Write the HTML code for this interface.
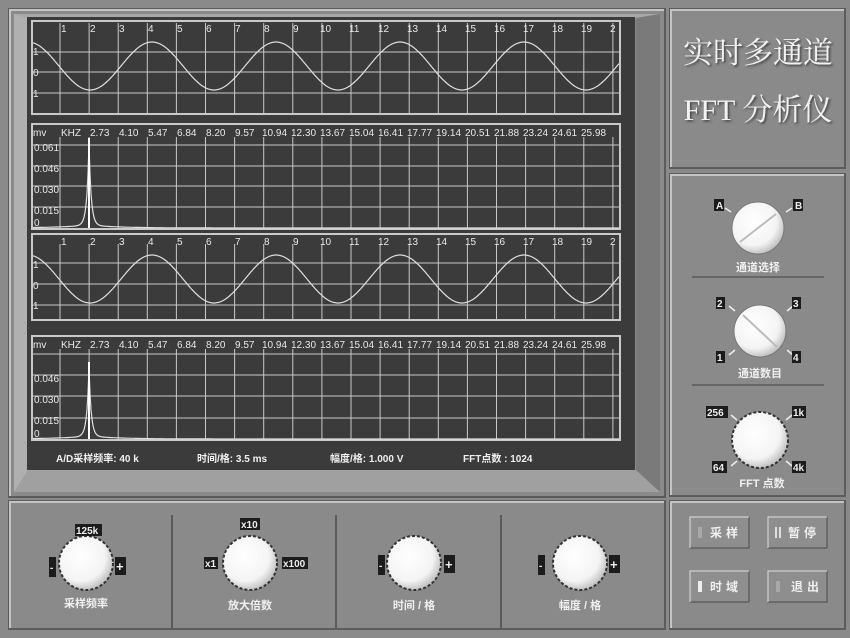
<!DOCTYPE html>
<html><head><meta charset="utf-8"><style>
body{margin:0;width:850px;height:638px;overflow:hidden;background:#8c8c8c;font-family:"Liberation Sans","Noto Sans CJK SC",sans-serif}
svg{position:absolute;left:0;top:0}
.t{fill:#e8e8e8;font-size:10px;font-family:"Liberation Sans",sans-serif}
.c{fill:#f0f0f0;font-family:"Liberation Sans","Noto Sans CJK SC",sans-serif;font-weight:bold}
.tag{fill:#1c1c1c}
</style></head><body>
<svg width="850" height="638" viewBox="0 0 850 638" xmlns="http://www.w3.org/2000/svg">
<defs>
<radialGradient id="kn" cx="40%" cy="38%" r="65%"><stop offset="0" stop-color="#ffffff"/><stop offset="0.7" stop-color="#f4f4f4"/><stop offset="1" stop-color="#bdbdbd"/></radialGradient>
<filter id="sh"><feDropShadow dx="1.5" dy="1.5" stdDeviation="1" flood-color="#333" flood-opacity="0.8"/></filter>
</defs>
<rect width="850" height="638" fill="#8a8a8a"/>
<!-- panels -->
<g fill="#8a8a8a">
<rect x="9" y="9" width="656" height="488" stroke="#5c5c5c" stroke-width="2"/>
<rect x="670" y="9" width="175" height="159" stroke="#5c5c5c" stroke-width="2"/>
<rect x="670" y="174" width="175" height="322" stroke="#5c5c5c" stroke-width="2"/>
<rect x="9" y="501" width="656" height="128" stroke="#5c5c5c" stroke-width="2"/>
<rect x="670" y="501" width="175" height="128" stroke="#5c5c5c" stroke-width="2"/>
</g>
<g stroke="#c4c4c4" stroke-width="2" fill="none">
<path d="M10 496V10H664"/><path d="M671 167V10H844"/><path d="M671 495V175H844"/><path d="M10 628V502H664"/><path d="M671 628V502H844"/>
</g>
<!-- screen bevel -->
<polygon points="14,14 660,14 636,18 28,18" fill="#a8a8a8"/>
<polygon points="28,470 636,470 660,492 14,492" fill="#a0a0a0"/>
<polygon points="636,18 660,14 660,492 636,470" fill="#7a7a7a"/>
<polygon points="14,14 28,18 28,470 14,492" fill="#b0b0b0"/>
<rect x="27" y="17" width="608" height="453" fill="#3b3b3b"/>
<g id="grid" stroke="#c9c9c9" stroke-width="1" fill="none"></g>
<g id="waves" stroke="#e0e0e0" stroke-width="1.2" fill="none"></g>
<g class="t">
<g id="n1"><text x="61" y="32">1</text><text x="90" y="32">2</text><text x="119" y="32">3</text><text x="148" y="32">4</text><text x="177" y="32">5</text><text x="206" y="32">6</text><text x="235" y="32">7</text><text x="264" y="32">8</text><text x="293" y="32">9</text><text x="320" y="32">10</text><text x="349" y="32">11</text><text x="378" y="32">12</text><text x="407" y="32">13</text><text x="436" y="32">14</text><text x="465" y="32">15</text><text x="494" y="32">16</text><text x="523" y="32">17</text><text x="552" y="32">18</text><text x="581" y="32">19</text><text x="610" y="32">2</text></g>
<text x="33" y="55">1</text><text x="33" y="76">0</text><text x="33" y="97">1</text>
<text x="33" y="136">mv</text><text x="61" y="136">KHZ</text>
<g id="k1"><text x="90" y="136">2.73</text><text x="119" y="136">4.10</text><text x="148" y="136">5.47</text><text x="177" y="136">6.84</text><text x="206" y="136">8.20</text><text x="235" y="136">9.57</text><text x="262" y="136">10.94</text><text x="291" y="136">12.30</text><text x="320" y="136">13.67</text><text x="349" y="136">15.04</text><text x="378" y="136">16.41</text><text x="407" y="136">17.77</text><text x="436" y="136">19.14</text><text x="465" y="136">20.51</text><text x="494" y="136">21.88</text><text x="523" y="136">23.24</text><text x="552" y="136">24.61</text><text x="581" y="136">25.98</text></g>
<text x="34" y="151">0.061</text><text x="34" y="172">0.046</text><text x="34" y="193">0.030</text><text x="34" y="214">0.015</text><text x="34" y="226">0</text>
<use href="#n1" y="213"/>
<text x="33" y="268">1</text><text x="33" y="289">0</text><text x="33" y="309">1</text>
<text x="33" y="348">mv</text><text x="61" y="348">KHZ</text>
<use href="#k1" y="212"/>
<text x="34" y="382">0.046</text><text x="34" y="403">0.030</text><text x="34" y="424">0.015</text><text x="34" y="437">0</text>
</g>
<g class="c" font-size="10" fill="#e8e8e8">
<text x="56" y="462">A/D采样频率:  40  k</text>
<text x="197" y="462">时间/格:  3.5  ms</text>
<text x="330" y="462">幅度/格:  1.000  V</text>
<text x="463" y="462">FFT点数 : 1024</text>
</g>
<!-- title -->
<g filter="url(#sh)" fill="#f2f2f2" font-family="'Liberation Serif','Noto Serif CJK SC',serif" font-size="30" text-anchor="middle">
<text x="758" y="63">实时多通道</text>
<text x="758" y="120">FFT 分析仪</text>
</g>
<!-- right knobs -->
<g stroke="#eee" stroke-width="1.5">
<line x1="725" y1="208" x2="731" y2="212"/><line x1="786" y1="212" x2="792" y2="208"/>
<line x1="729" y1="306" x2="735" y2="311"/><line x1="787" y1="311" x2="793" y2="306"/>
<line x1="729" y1="355" x2="735" y2="350"/><line x1="787" y1="350" x2="793" y2="355"/>
<line x1="731" y1="415" x2="737" y2="420"/><line x1="786" y1="420" x2="792" y2="415"/>
<line x1="731" y1="466" x2="737" y2="461"/><line x1="786" y1="461" x2="792" y2="466"/>
</g>
<line x1="692" y1="277" x2="824" y2="277" stroke="#666" stroke-width="2"/>
<line x1="692" y1="385" x2="824" y2="385" stroke="#666" stroke-width="2"/>
<circle cx="758" cy="228" r="26" fill="url(#kn)" stroke="#777"/><line x1="740" y1="242" x2="776" y2="214" stroke="#bbb" stroke-width="2"/>
<circle cx="760" cy="331" r="26" fill="url(#kn)" stroke="#777"/><line x1="743" y1="315" x2="777" y2="347" stroke="#bbb" stroke-width="2"/>
<circle cx="760" cy="440" r="28" fill="url(#kn)" stroke="#333" stroke-width="2" stroke-dasharray="3 2"/>
<g font-size="10" font-weight="bold" font-family="Liberation Sans,sans-serif">
<rect class="tag" x="714" y="199" width="10" height="12"/><text x="716" y="209" fill="#eee">A</text>
<rect class="tag" x="793" y="199" width="10" height="12"/><text x="795" y="209" fill="#eee">B</text>
<rect class="tag" x="716" y="297" width="9" height="12"/><text x="717" y="307" fill="#eee">2</text>
<rect class="tag" x="792" y="297" width="9" height="12"/><text x="793" y="307" fill="#eee">3</text>
<rect class="tag" x="716" y="351" width="9" height="12"/><text x="717" y="361" fill="#eee">1</text>
<rect class="tag" x="792" y="351" width="9" height="12"/><text x="793" y="361" fill="#eee">4</text>
<rect class="tag" x="706" y="406" width="22" height="12"/><text x="707" y="416" fill="#eee">256</text>
<rect class="tag" x="792" y="406" width="14" height="12"/><text x="793" y="416" fill="#eee">1k</text>
<rect class="tag" x="712" y="461" width="15" height="12"/><text x="713" y="471" fill="#eee">64</text>
<rect class="tag" x="792" y="461" width="14" height="12"/><text x="793" y="471" fill="#eee">4k</text>
</g>
<g class="c" font-size="11" text-anchor="middle">
<text x="758" y="271">通道选择</text><text x="760" y="377">通道数目</text><text x="762" y="487">FFT 点数</text>
</g>
<!-- bottom knobs -->
<g stroke="#5a5a5a" stroke-width="2"><line x1="172" y1="515" x2="172" y2="628"/><line x1="336" y1="515" x2="336" y2="628"/><line x1="501" y1="515" x2="501" y2="628"/></g>
<g fill="url(#kn)" stroke="#333" stroke-width="2" stroke-dasharray="3 2">
<circle cx="86" cy="563" r="27"/><circle cx="250" cy="563" r="27"/><circle cx="414" cy="563" r="27"/><circle cx="580" cy="563" r="27"/>
</g>
<g font-size="10" font-weight="bold" font-family="Liberation Sans,sans-serif" fill="#eee">
<rect class="tag" x="75" y="524" width="27" height="12"/><text x="76" y="534">125k</text>
<rect class="tag" x="49" y="557" width="7" height="20"/><text x="50" y="571">-</text>
<rect class="tag" x="115" y="557" width="11" height="18"/><text x="116" y="571" font-size="13">+</text>
<rect class="tag" x="240" y="518" width="20" height="12"/><text x="241" y="528">x10</text>
<rect class="tag" x="204" y="557" width="14" height="12"/><text x="205" y="567">x1</text>
<rect class="tag" x="282" y="557" width="26" height="12"/><text x="283" y="567">x100</text>
<rect class="tag" x="378" y="555" width="7" height="20"/><text x="379" y="569">-</text>
<rect class="tag" x="444" y="555" width="11" height="18"/><text x="445" y="569" font-size="13">+</text>
<rect class="tag" x="538" y="555" width="7" height="20"/><text x="539" y="569">-</text>
<rect class="tag" x="609" y="555" width="11" height="18"/><text x="610" y="569" font-size="13">+</text>
</g>
<g class="c" font-size="11" text-anchor="middle">
<text x="86" y="607">采样频率</text><text x="250" y="609">放大倍数</text><text x="414" y="609">时间 / 格</text><text x="580" y="609">幅度 / 格</text>
</g>
<!-- buttons -->
<g>
<rect x="690" y="517" width="59" height="31" fill="#8e8e8e" stroke="#4a4a4a"/><path d="M690 548V517H749" stroke="#ddd" fill="none"/>
<rect x="768" y="517" width="59" height="31" fill="#8e8e8e" stroke="#4a4a4a"/><path d="M768 548V517H827" stroke="#ddd" fill="none"/>
<rect x="690" y="571" width="59" height="31" fill="#8e8e8e" stroke="#4a4a4a"/><path d="M690 602V571H749" stroke="#ddd" fill="none"/>
<rect x="768" y="571" width="59" height="31" fill="#8e8e8e" stroke="#4a4a4a"/><path d="M768 602V571H827" stroke="#ddd" fill="none"/>
<rect x="698" y="527" width="4" height="11" fill="#a8a8a8"/><rect x="775" y="527" width="2" height="11" fill="#ddd"/><rect x="779" y="527" width="2" height="11" fill="#ddd"/>
<rect x="698" y="581" width="4" height="11" fill="#eee"/><rect x="776" y="581" width="4" height="11" fill="#a8a8a8"/>
</g>
<g class="c" font-size="12" letter-spacing="4">
<text x="710" y="537">采样</text><text x="788" y="537">暂停</text><text x="710" y="591">时域</text><text x="791" y="591">退出</text>
</g>
</svg>
<script>
var ns="http://www.w3.org/2000/svg",g=document.getElementById('grid'),w=document.getElementById('waves');
function el(p,t,a){var e=document.createElementNS(ns,t);for(var k in a)e.setAttribute(k,a[k]);p.appendChild(e);return e;}
var charts=[[21,114,[52,72,93],23],[124,229,[145,166,186,207],137],[234,320,[263,284,305],244],[336,440,[354,375,396,418],349]];
charts.forEach(function(c){
el(g,'rect',{x:32,y:c[0],width:588,height:c[1]-c[0],'stroke-width':2});
c[2].forEach(function(y){el(g,'line',{x1:33,x2:619,y1:y,y2:y});});
for(var i=0;i<20;i++){var x=60+i*29.1;el(g,'line',{x1:x,x2:x,y1:c[3],y2:c[1]});}
});
[[66],[279]].forEach(function(c){var d='';for(var x=33;x<=619;x++){var y=c[0]-24*Math.cos(2*Math.PI*(x-152)/124);d+=(x==33?'M':'L')+x+' '+y.toFixed(1);}el(w,'path',{d:d});});
[[228,148],[439,372]].forEach(function(c){var d='';for(var x=33;x<=619;x++){var dx=x-89;var h=(c[0]-c[1])*Math.exp(-Math.abs(dx)/2.2)+3*Math.exp(-Math.abs(dx)/30);d+=(x==33?'M':'L')+x+' '+(c[0]-h).toFixed(1);}el(w,'path',{d:d});el(w,'line',{x1:89,x2:89,y1:c[1]-10,y2:c[0],'stroke-width':2,stroke:'#fff'});});
</script>
</body></html>
